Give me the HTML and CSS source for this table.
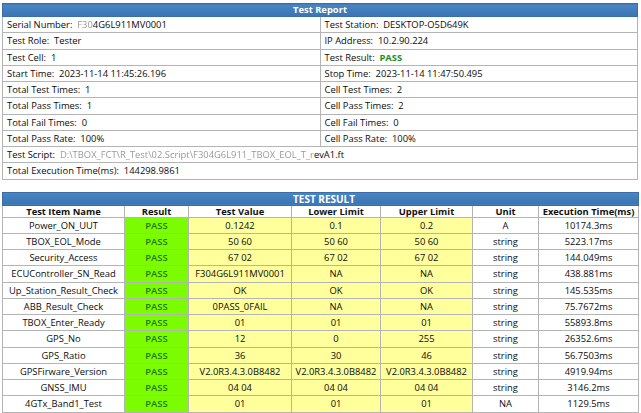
FILE: index.html
```html
<!DOCTYPE html>
<html>
<head>
<meta charset="utf-8">
<title>Test Report</title>
<link rel="stylesheet" href="styles.css">
</head>
<body>
<table class="report">
  <tr><th colspan="2" class="head">Test Report</th></tr>
  <tr><td>Serial Number:&nbsp; <span class="blur">F30</span>4G6L911MV0001</td><td>Test Station:&nbsp; DESKTOP-O5D649K</td></tr>
  <tr><td>Test Role:&nbsp; Tester</td><td>IP Address:&nbsp; 10.2.90.224</td></tr>
  <tr><td>Test Cell:&nbsp; 1</td><td>Test Result:&nbsp; <span class="ok">PASS</span></td></tr>
  <tr><td>Start Time:&nbsp; 2023-11-14 11:45:26.196</td><td>Stop Time:&nbsp; 2023-11-14 11:47:50.495</td></tr>
  <tr><td>Total Test Times:&nbsp; 1</td><td>Cell Test Times:&nbsp; 2</td></tr>
  <tr><td>Total Pass Times:&nbsp; 1</td><td>Cell Pass Times:&nbsp; 2</td></tr>
  <tr><td>Total Fail Times:&nbsp; 0</td><td>Cell Fail Times:&nbsp; 0</td></tr>
  <tr><td>Total Pass Rate:&nbsp; 100%</td><td>Cell Pass Rate:&nbsp; 100%</td></tr>
  <tr><td colspan="2">Test Script:&nbsp; <span class="blur">D:\TBOX_FCT\R_Test\02.Script\F304G6L911_TBOX_EOL_T_r</span>evA1.ft</td></tr>
  <tr><td colspan="2">Total Execution Time(ms):&nbsp; 144298.9861</td></tr>
</table>

<table class="result">
  <colgroup>
    <col class="c-name"><col class="c-res"><col class="c-val"><col class="c-lo"><col class="c-up"><col class="c-unit"><col class="c-time">
  </colgroup>
  <tr><th colspan="7" class="head">TEST RESULT</th></tr>
  <tr class="cols"><th>Test Item Name</th><th>Result</th><th>Test Value</th><th>Lower Limit</th><th>Upper Limit</th><th>Unit</th><th>Execution Time(ms)</th></tr>
  <tr><td>Power_ON_UUT</td><td class="pass">PASS</td><td class="y">0.1242</td><td class="y">0.1</td><td class="y">0.2</td><td>A</td><td>10174.3ms</td></tr>
  <tr><td>TBOX_EOL_Mode</td><td class="pass">PASS</td><td class="y">50 60</td><td class="y">50 60</td><td class="y">50 60</td><td>string</td><td>5223.17ms</td></tr>
  <tr><td>Security_Access</td><td class="pass">PASS</td><td class="y">67 02</td><td class="y">67 02</td><td class="y">67 02</td><td>string</td><td>144.049ms</td></tr>
  <tr><td>ECUController_SN_Read</td><td class="pass">PASS</td><td class="y">F304G6L911MV0001</td><td class="y">NA</td><td class="y">NA</td><td>string</td><td>438.881ms</td></tr>
  <tr><td>Up_Station_Result_Check</td><td class="pass">PASS</td><td class="y">OK</td><td class="y">OK</td><td class="y">OK</td><td>string</td><td>145.535ms</td></tr>
  <tr><td>ABB_Result_Check</td><td class="pass">PASS</td><td class="y">0PASS_0FAIL</td><td class="y">NA</td><td class="y">NA</td><td>string</td><td>75.7672ms</td></tr>
  <tr><td>TBOX_Enter_Ready</td><td class="pass">PASS</td><td class="y">01</td><td class="y">01</td><td class="y">01</td><td>string</td><td>55893.8ms</td></tr>
  <tr><td>GPS_No</td><td class="pass">PASS</td><td class="y">12</td><td class="y">0</td><td class="y">255</td><td>string</td><td>26352.6ms</td></tr>
  <tr><td>GPS_Ratio</td><td class="pass">PASS</td><td class="y">36</td><td class="y">30</td><td class="y">46</td><td>string</td><td>56.7503ms</td></tr>
  <tr><td>GPSFirware_Version</td><td class="pass">PASS</td><td class="y">V2.0R3.4.3.0B8482</td><td class="y">V2.0R3.4.3.0B8482</td><td class="y">V2.0R3.4.3.0B8482</td><td>string</td><td>4919.94ms</td></tr>
  <tr><td>GNSS_IMU</td><td class="pass">PASS</td><td class="y">04 04</td><td class="y">04 04</td><td class="y">04 04</td><td>string</td><td>3146.2ms</td></tr>
  <tr><td>4GTx_Band1_Test</td><td class="pass">PASS</td><td class="y">01</td><td class="y">01</td><td class="y">01</td><td>NA</td><td>1129.5ms</td></tr>
</table>
</body>
</html>
```

FILE: styles.css
```css
html, body {
  margin: 0;
  padding: 0;
  background: #ffffff;
}
body {
  padding: 3px 3px 0 2px;
  font-family: "Open Sans", "Noto Sans", sans-serif;
  font-size: 9.4px;
  color: #0c0c0c;
}
table {
  width: 636px;
  border-collapse: collapse;
  table-layout: fixed;
}
.report {
  border: 1px solid #8a8a8a;
}
.report td {
  height: 15.25px;
  padding: 0 0 0 4px;
  border: 1px solid #b4b4b4;
  white-space: nowrap;
  overflow: hidden;
  line-height: 15px;
}
.report td:first-child { width: 315px; }
.head {
  background: linear-gradient(#4a86c3, #3a74b2);
  color: #ffffff;
  font-weight: 700;
  height: 12px;
  padding: 0;
  line-height: 12px;
  text-align: center;
  border: 1px solid #3a6ea8;
}
.ok {
  color: #1a8f1a;
  font-weight: 700;
}
.blur {
  color: #9a9a9a;
  filter: blur(0.7px);
}
.result {
  margin-top: 12px;
  border: 1px solid #8a8a8a;
}
.result .head {
  height: 12px;
  line-height: 12px;
  font-size: 10px;
  text-align: left;
  padding-left: 290px;
}
.c-name { width: 122px; }
.c-res { width: 64px; }
.c-val { width: 103px; }
.c-lo { width: 89px; }
.c-up { width: 92px; }
.c-unit { width: 66px; }
.c-time { width: 100px; }
.cols th {
  height: 11px;
  line-height: 11px;
  padding: 0;
  font-weight: 700;
  color: #111;
  border: 1px solid #b4b4b4;
  background: #fff;
}
.result td {
  height: 15.25px;
  line-height: 15px;
  padding: 0;
  text-align: center;
  border: 1px solid #b4b4b4;
  white-space: nowrap;
  overflow: hidden;
}
.result td.pass {
  background: #7cfc00;
  color: #217a12;
  font-weight: 600;
}
.result td.y {
  background: #ffff9c;
}
```
